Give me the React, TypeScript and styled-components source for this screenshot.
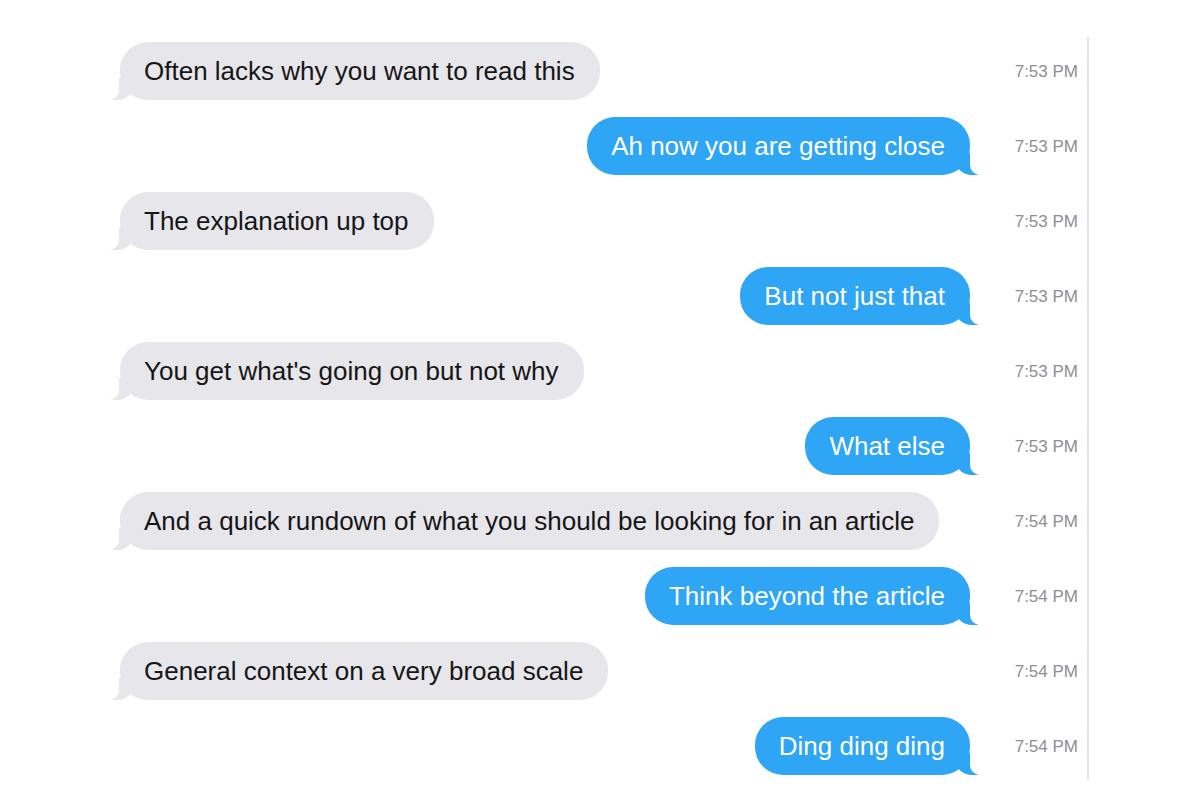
import styled, { createGlobalStyle } from "styled-components";

type Message = {
    text: string,
    time: string,
    mine: boolean,
}

const messages: Message[] = [
    { text: "Often lacks why you want to read this", time: "7:53 PM", mine: false },
    { text: "Ah now you are getting close", time: "7:53 PM", mine: true },
    { text: "The explanation up top", time: "7:53 PM", mine: false },
    { text: "But not just that", time: "7:53 PM", mine: true },
    { text: "You get what's going on but not why", time: "7:53 PM", mine: false },
    { text: "What else", time: "7:53 PM", mine: true },
    { text: "And a quick rundown of what you should be looking for in an article", time: "7:54 PM", mine: false },
    { text: "Think beyond the article", time: "7:54 PM", mine: true },
    { text: "General context on a very broad scale", time: "7:54 PM", mine: false },
    { text: "Ding ding ding", time: "7:54 PM", mine: true },
];

export default function App() {
    return (
        <>
            <GlobalStyle />
            <Page>
                <Thread>
                    {messages.map((m, i) => (
                        <Row key={i}>
                            <Lane $mine={m.mine}>
                                <Bubble $mine={m.mine}>{m.text}</Bubble>
                            </Lane>
                            <Time>{m.time}</Time>
                        </Row>
                    ))}
                </Thread>
            </Page>
        </>
    );
}

const GlobalStyle = createGlobalStyle`
    html, body {
        margin: 0;
        background: #ffffff;
    }
    body {
        font-family: "Liberation Sans", Arial, sans-serif;
    }
`;

const Page = styled.div`
    width: 1200px;
    height: 796px;
    padding-top: 37px;
    box-sizing: border-box;
`;

const Thread = styled.div`
    margin-left: 120px;
    width: 969px;
    box-sizing: border-box;
    padding: 5px 9px 5px 0;
    border-right: 2px solid #e4e4e7;
    display: flex;
    flex-direction: column;
    gap: 17px;
`;

const Row = styled.div`
    display: grid;
    grid-template-columns: 850px 108px;
    align-items: center;
    height: 58px;
`;

const Lane = styled.div<{ $mine: boolean }>`
    display: flex;
    justify-content: ${(p) => (p.$mine ? "flex-end" : "flex-start")};
`;

const Bubble = styled.div<{ $mine: boolean }>`
    position: relative;
    height: 58px;
    display: flex;
    align-items: center;
    padding: 1px 25px 0 24px;
    box-sizing: border-box;
    border-radius: 28px;
    font-size: 26px;
    white-space: nowrap;
    background: ${(p) => (p.$mine ? "#2fa5f6" : "#e6e6eb")};
    color: ${(p) => (p.$mine ? "#ffffff" : "#161616")};

    &::before {
        content: "";
        position: absolute;
        bottom: 0;
        ${(p) => (p.$mine ? "right: -8px;" : "left: -9px;")}
        width: 22px;
        height: 22px;
        background: ${(p) => (p.$mine ? "#2fa5f6" : "#e6e6eb")};
        ${(p) => (p.$mine ? "border-bottom-left-radius: 16px 14px;" : "border-bottom-right-radius: 16px 14px;")}
    }

    &::after {
        content: "";
        position: absolute;
        bottom: 0;
        ${(p) => (p.$mine ? "right: -12px;" : "left: -13px;")}
        width: 12px;
        height: 22px;
        background: #ffffff;
        ${(p) => (p.$mine ? "border-bottom-left-radius: 10px;" : "border-bottom-right-radius: 10px;")}
    }
`;

const Time = styled.div`
    text-align: right;
    font-size: 17px;
    color: #8e8e93;
    padding-top: 2px;
`;
